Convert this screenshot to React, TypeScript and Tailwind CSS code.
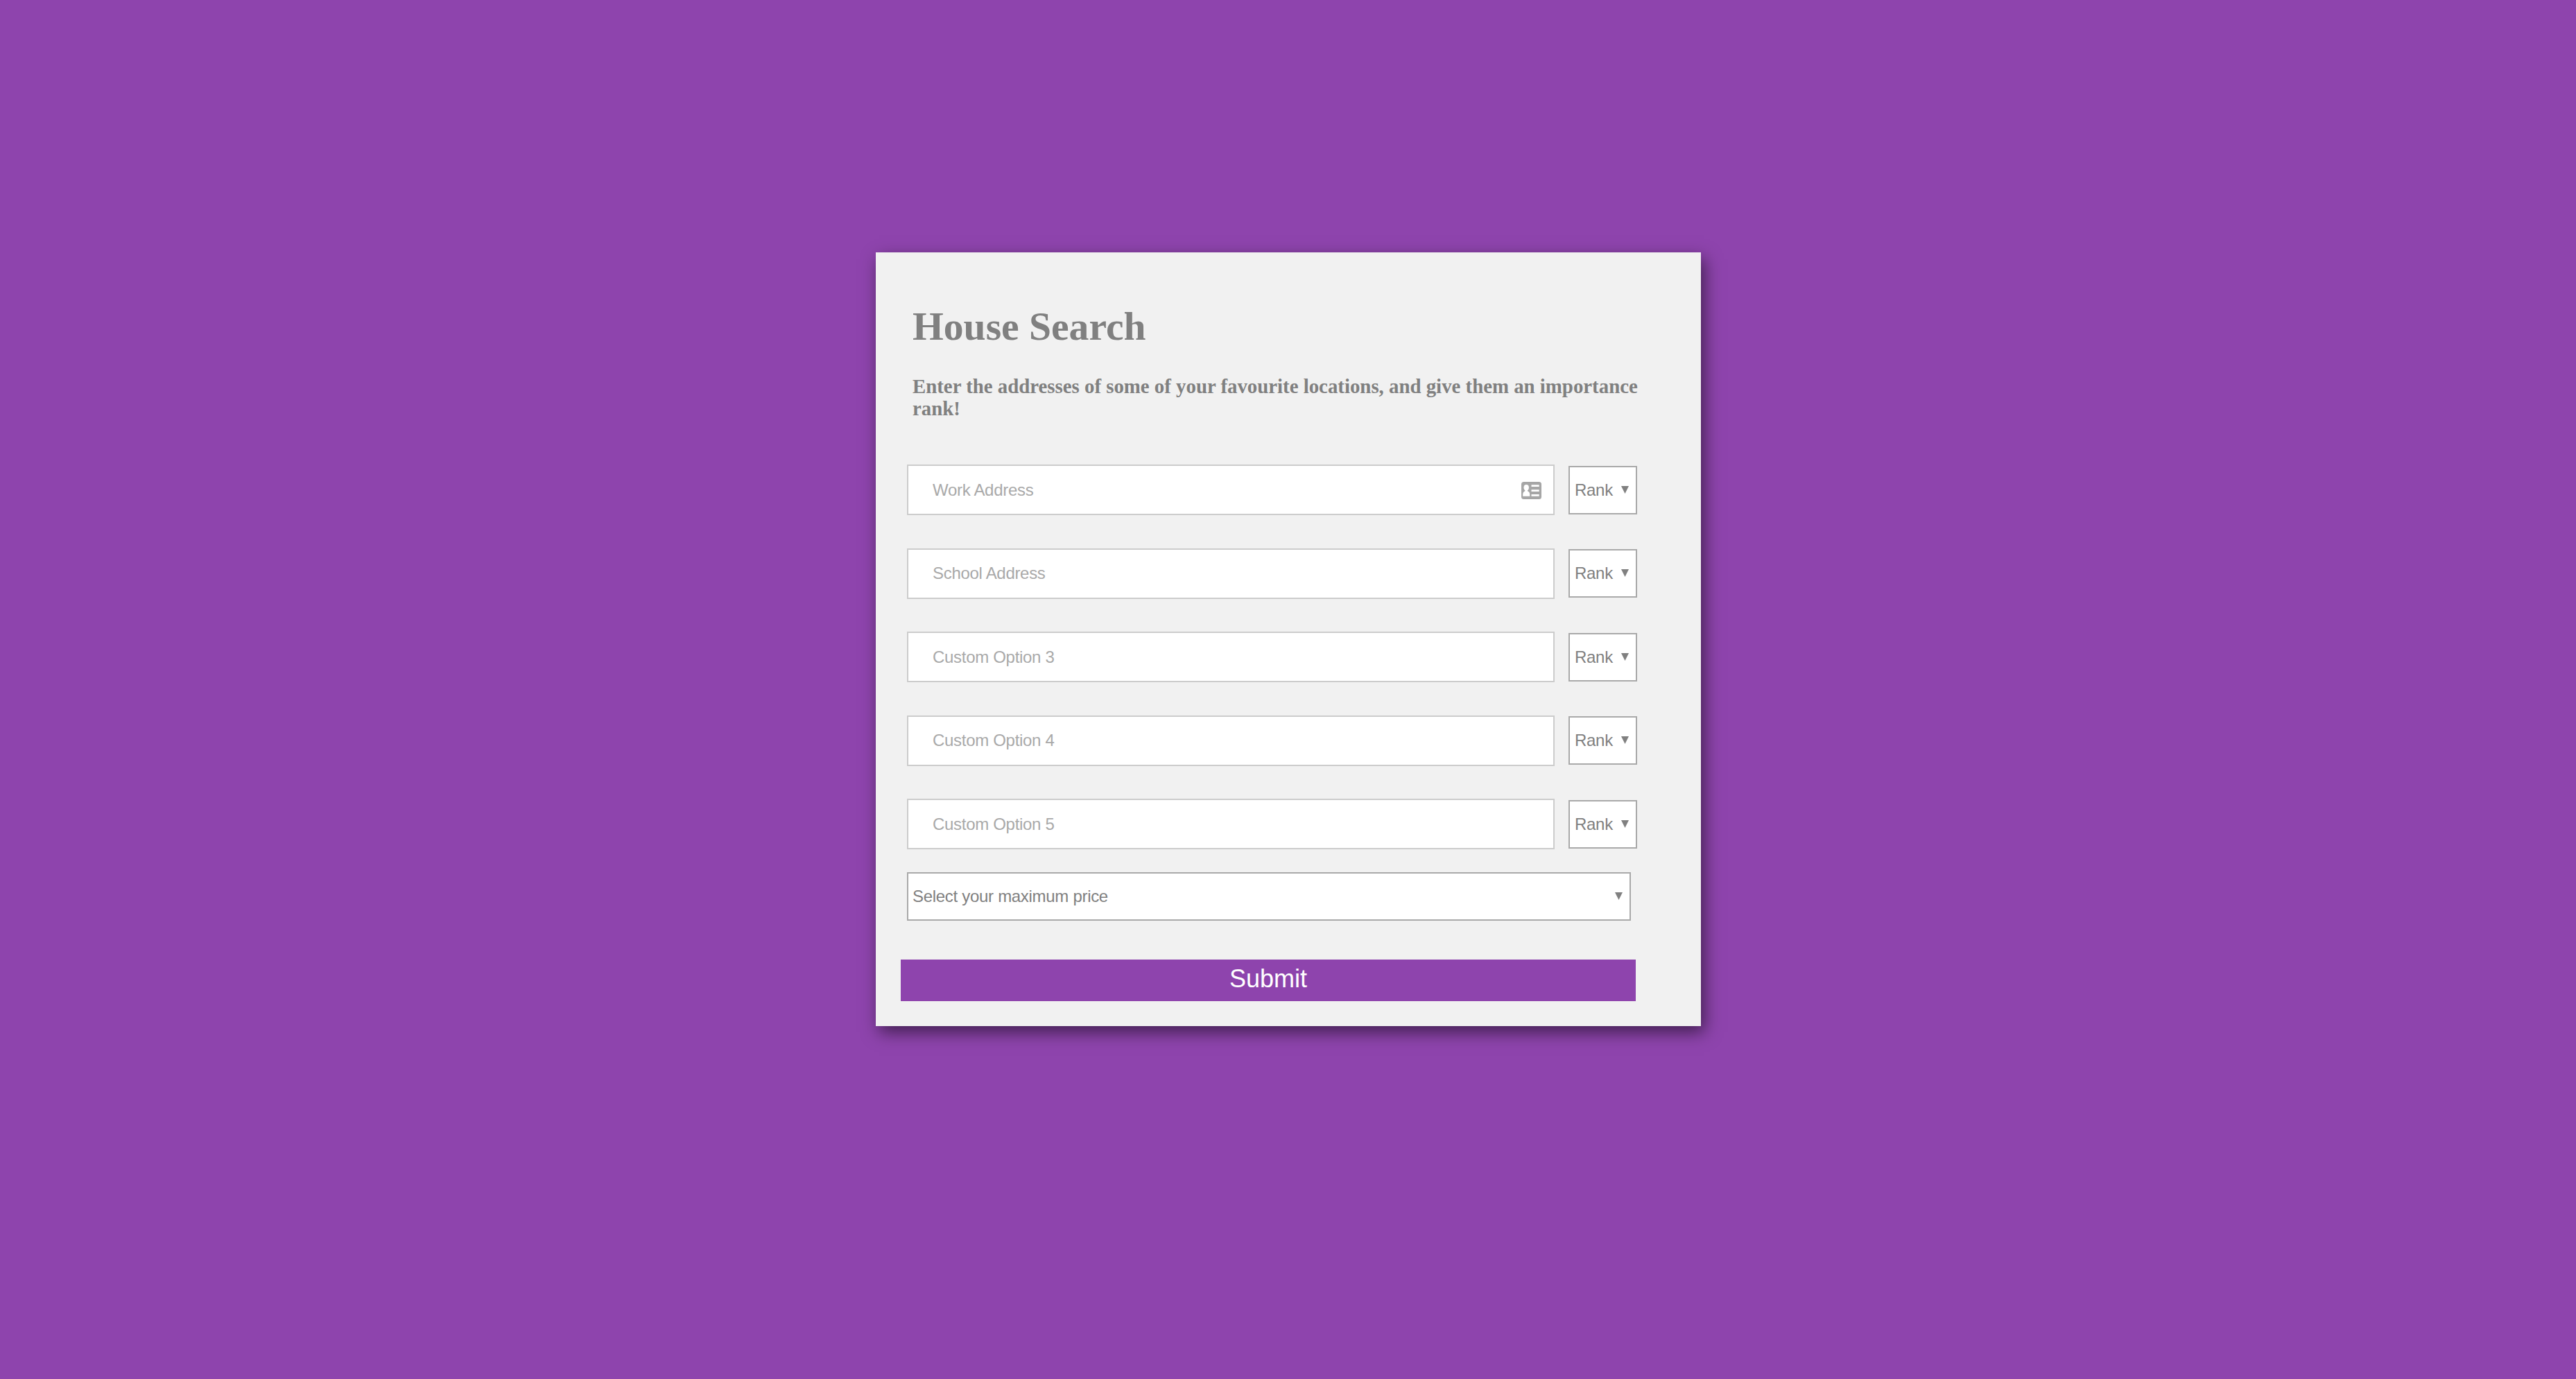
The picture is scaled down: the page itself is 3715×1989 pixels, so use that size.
import React from 'react';

const addresses = [
  'Work Address',
  'School Address',
  'Custom Option 3',
  'Custom Option 4',
  'Custom Option 5',
];

const Arrow = () => (
  <svg
    className="mb-[1px] h-[11px] w-[11px] shrink-0"
    viewBox="0 0 11 11"
    fill="#808080"
  >
    <path d="M0 0h11L5.500 11z" />
  </svg>
);

const ContactIcon = () => (
  <svg
    className="absolute top-[25px] right-[19px] h-[25px] w-[29px]"
    viewBox="0 0 29 25"
  >
    <rect width="29" height="25" rx="3.500" fill="#a6a6a6" />
    <g fill="#fff">
      <ellipse cx="7.200" cy="8.200" rx="3.700" ry="4.200" />
      <path d="M5.400 11h3.600v2.300c2 .7 3.200 2.400 3.200 5V20.700H2.200v-2.400c0-2.600 1.200-4.300 3.200-5z" />
      <path d="M14.500 4.300h11.200v2.800H14.500zM14.500 11.200h11.200v2.700H14.500zM14.500 18h11.200v2.700H14.500z" />
    </g>
  </svg>
);

const App = () => {
  return (
    <main className="h-[1989px] w-full overflow-hidden bg-[#8e44ad] pt-[364px] font-['Liberation_Sans',sans-serif]">
      <form className="ml-[1263px] h-[1115.500px] w-[1189.600px] bg-[#f1f1f1] pt-[73.500px] pl-9 text-[#808080] shadow-[5px_9px_23px_rgba(0,0,0,0.54)]">
        <div className="ml-[17px] w-[1060px] font-['Liberation_Serif',serif] font-bold">
          <h1 className="text-[57.600px] leading-[66px]">House Search</h1>
          <h3 className="mt-[37px] text-[28.830px] leading-[32.400px]">
            Enter the addresses of some of your favourite locations, and give
            them an importance rank!
          </h3>
        </div>
        <div className="mt-[64.700px] ml-[9px] flex flex-col gap-[47.500px]">
          {addresses.map((address, i) => (
            <div key={address} className="flex items-center gap-5">
              <div className="relative">
                <input
                  type="text"
                  placeholder={address}
                  className="block h-[73px] w-[934px] border-2 border-[#ccc] bg-white px-[35px] text-[24px] tracking-[-0.3px] placeholder:text-[#a9a9a9]"
                />
                {i === 0 && <ContactIcon />}
              </div>
              <button
                type="button"
                className="flex h-[70px] w-[99px] items-center justify-between border-2 border-[#a9a9a9] bg-white pr-[10px] pl-[7px] text-[24px] tracking-[-0.3px]"
              >
                <span>Rank</span>
                <Arrow />
              </button>
            </div>
          ))}
        </div>
        <button
          type="button"
          className="mt-[33px] ml-[9px] flex h-[70px] w-[1043.500px] items-center justify-between border-2 border-[#a9a9a9] bg-white pr-[10px] pl-[6px] text-[24px] tracking-[-0.3px]"
        >
          <span>Select your maximum price</span>
          <Arrow />
        </button>
        <button
          type="submit"
          className="mt-[56.200px] block h-[59.500px] w-[1060px] bg-[#8e44ad] pb-1 text-[36px] leading-none text-white"
        >
          Submit
        </button>
      </form>
    </main>
  );
};

export default App;
